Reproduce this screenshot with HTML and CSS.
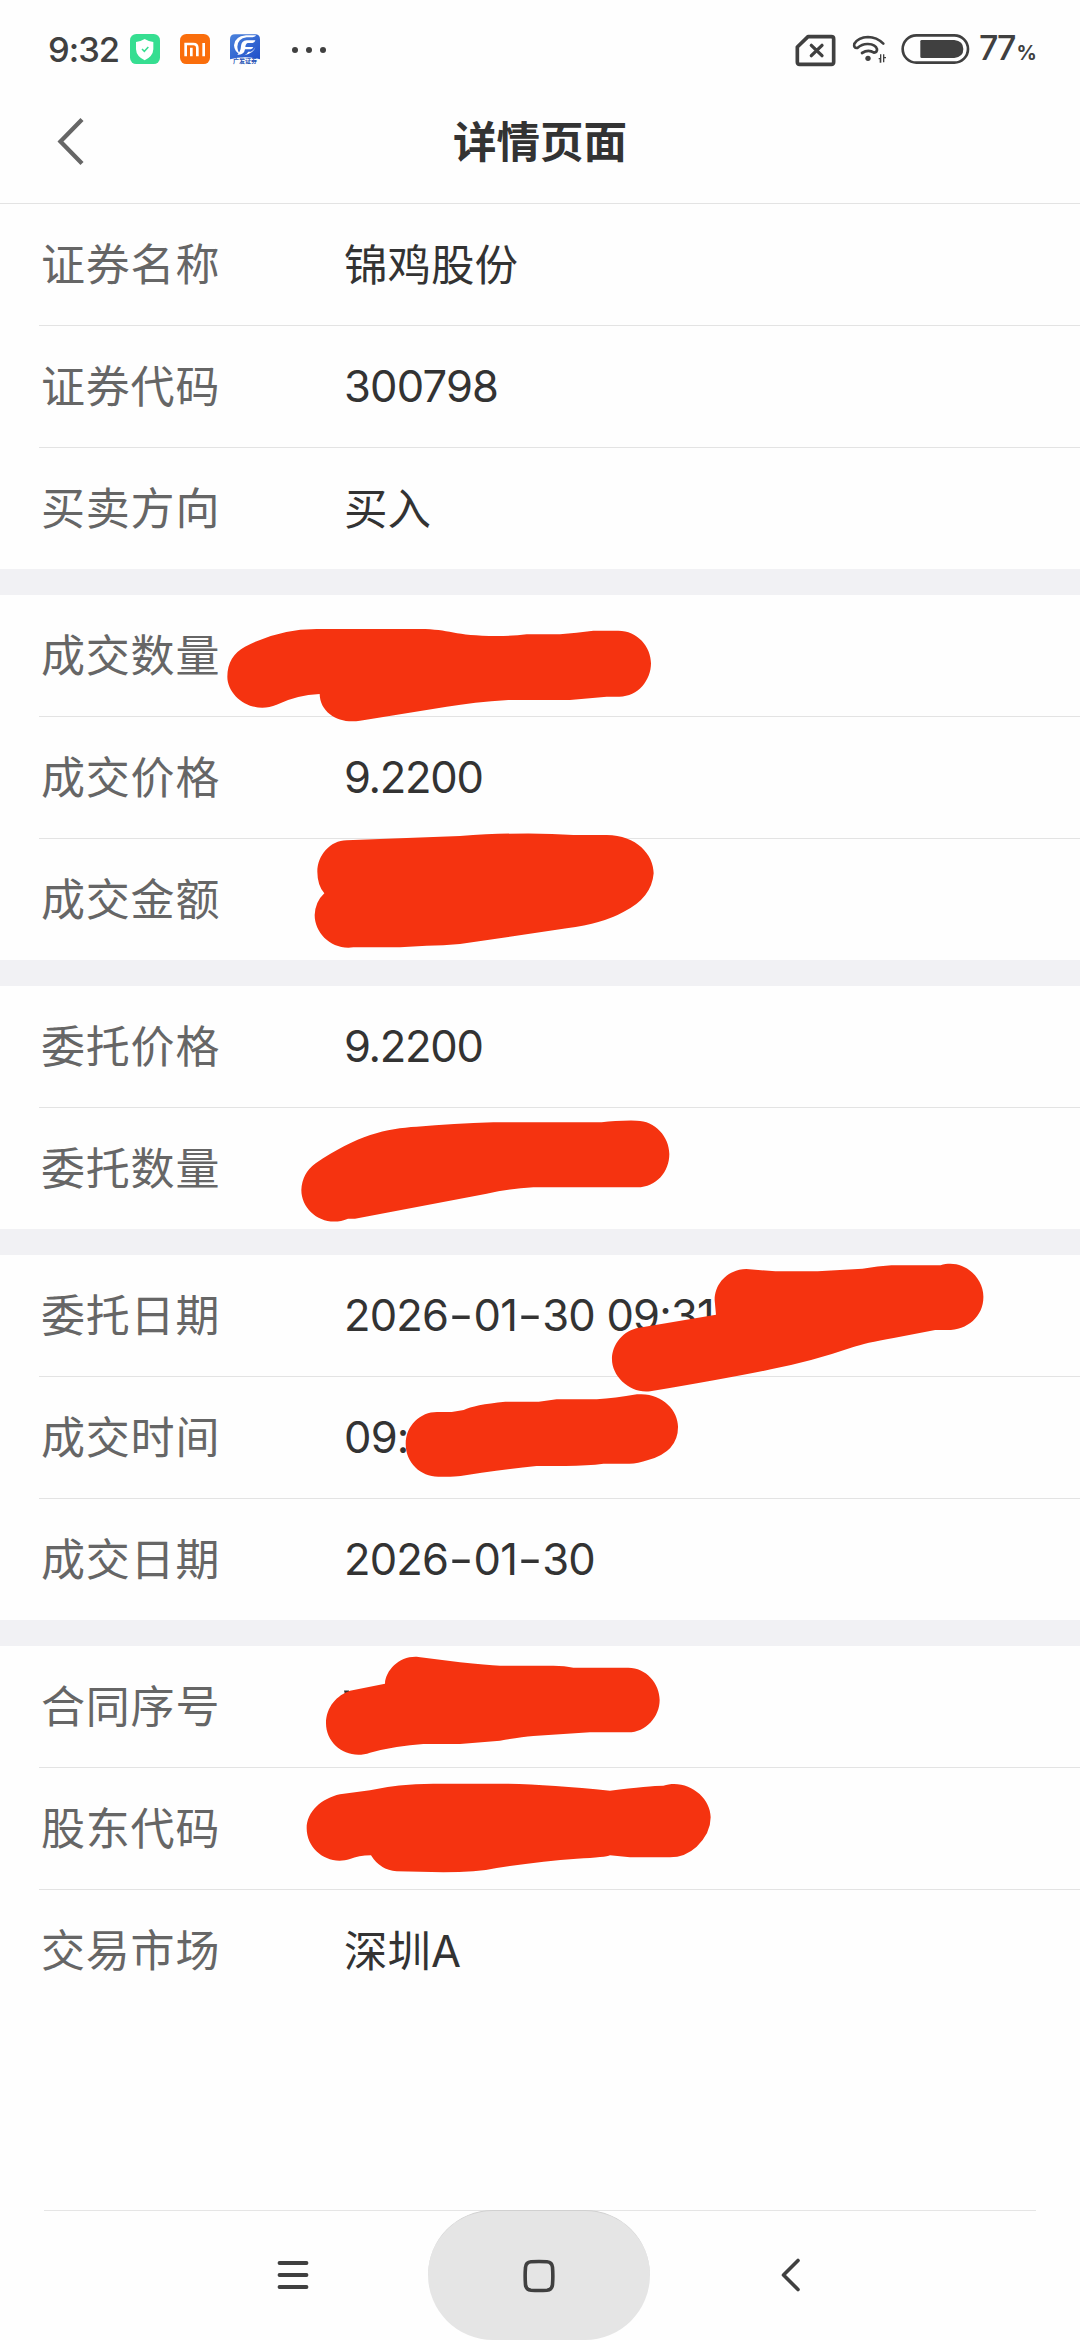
FILE: index.html
```html
<!DOCTYPE html>
<html lang="zh-CN">
<head>
<meta charset="utf-8">
<title>详情页面</title>
<link rel="stylesheet" href="styles.css">
</head>
<body>
<div class="screen">
  <div class="status">
    <div class="status-left">
      <span class="time">9:32</span>
      <svg class="app" viewBox="0 0 90 90"><rect width="90" height="90" rx="19" fill="#36de91"/><path d="M44 15q13 8 26 9v22q-1 21-26 33Q19 67 18 46V24q13-1 26-9z" fill="#fff"/><path d="M36 45l7 7 12-13" fill="none" stroke="#36de91" stroke-width="4.500"/></svg>
      <svg class="app" viewBox="0 0 90 90"><rect width="90" height="90" rx="19" fill="#fa6e0c"/><path d="M17 67V30h23q12 0 12 12v25M34 41v26M71 27v40" fill="none" stroke="#fff" stroke-width="8"/></svg>
      <svg class="app" viewBox="0 0 90 90"><defs><linearGradient id="blue" x1="0" y1="0" x2="1" y2="1"><stop offset="0" stop-color="#4b83dc"/><stop offset="1" stop-color="#1f4fc9"/></linearGradient></defs><path d="M0 76V16Q0 1 15 1h60q15 0 15 15v60q-45-12-90 0z" fill="url(#blue)"/><path d="M78 4H48Q13 8 12 34q1 20 20 28-9-8-10-24Q23 14 50 10h18q8-1 10-6zM76 19H50q-16 2-17 17-1 17-11 26 20 2 23-16h17q6-1 8-7H46q1-11 8-12h14q7-2 8-8zM76 40q-6 19-33 24 8-4 12-11h8q8-3 13-13z" fill="#fff"/><text class="app-name" x="45" y="88" text-anchor="middle">广发证券</text></svg>
      <span class="dots"><i></i><i></i><i></i></span>
    </div>
    <div class="status-right">
      <svg width="180" height="40" viewBox="155 90 540 120"><g fill="none" stroke="#404040"><path d="M203 110h70q7 0 7 7v69q0 7-7 7h-95q-7 0-7-7v-45z" stroke-width="11" stroke-linejoin="round"/><path d="M213 136l32 31m0-31l-32 31" stroke-width="10" stroke-linecap="round"/><g stroke-width="8" stroke-linecap="round"><path d="M429 131q-20-20-46-20-29 1-41 20-3 14 9 13 15-13 32-12 23 1 27 15 1 10-9 11-17-11-36 1"/></g><path d="M415 176h5v12M421 163v25M430 187v-24m0 10h7" stroke-width="4"/><rect x="487" y="106" width="196" height="82" rx="41" stroke-width="8"/></g><circle cx="383" cy="175" r="8" fill="#404040"/><path d="M544 120h98q27 3 27 27t-27 27h-98q-4 0-4-4v-46q0-4 4-4z" fill="#404040"/></svg>
      <span class="percent">77<small>%</small></span>
    </div>
  </div>
  <header class="header">
    <svg class="back" viewBox="0 0 28 50"><path d="M25 2.500L3.500 24.500 25 46.500" fill="none" stroke="#666" stroke-width="4.300"/></svg>
    <h1>详情页面</h1>
  </header>
  <main>
    <section>
      <div class="row"><span class="label">证券名称</span><span class="value">锦鸡股份</span></div>
      <div class="row"><span class="label">证券代码</span><span class="value num">300798</span></div>
      <div class="row"><span class="label">买卖方向</span><span class="value">买入</span></div>
    </section>
    <section>
      <div class="row"><span class="label">成交数量</span></div>
      <div class="row"><span class="label">成交价格</span><span class="value num price">9.2200</span></div>
      <div class="row"><span class="label">成交金额</span></div>
    </section>
    <section>
      <div class="row"><span class="label">委托价格</span><span class="value num price">9.2200</span></div>
      <div class="row"><span class="label">委托数量</span></div>
    </section>
    <section>
      <div class="row"><span class="label">委托日期</span><span class="value num">2026<b class="dash">-</b>01<b class="dash">-</b>30 09:31</span></div>
      <div class="row"><span class="label">成交时间</span><span class="value num">09:</span></div>
      <div class="row"><span class="label">成交日期</span><span class="value num">2026<b class="dash">-</b>01<b class="dash">-</b>30</span></div>
    </section>
    <section>
      <div class="row"><span class="label">合同序号</span></div>
      <div class="row"><span class="label">股东代码</span></div>
      <div class="row"><span class="label">交易市场</span><span class="value">深圳A</span></div>
    </section>
  </main>
  <nav class="nav">
    <span class="key"><svg width="32" height="34" viewBox="0 0 32 34"><path d="M2.500 5h27M2.500 17h27M2.500 29h27" stroke="#404040" stroke-width="3.800" stroke-linecap="round"/></svg></span>
    <span class="key home"><svg width="34" height="34" viewBox="0 0 34 34"><path d="M9 2.800q8-.6 16 0 5 .5 5.500 5.500.7 8.700 0 17.400-.5 5-5.500 5.500-8 .6-16 0-5-.5-5.500-5.500-.7-8.700 0-17.400Q4 3.300 9 2.800z" fill="none" stroke="#404040" stroke-width="3.600"/></svg></span>
    <span class="key"><svg width="22" height="34" viewBox="0 0 22 34"><path d="M18 2.500L3.500 17 18 31.500" fill="none" stroke="#404040" stroke-width="3.600" stroke-linecap="round" stroke-linejoin="round"/></svg></span>
  </nav>
  <svg class="marks" viewBox="0 0 1080 2340">
    <path d="M344 1690.500h5v2h-2v2h-2z" fill="#333"/>
    <g fill="#f53310">
      <g transform="translate(200 580) scale(.33333)">
        <path d="M82 290C82 248 101 218 135 200Q235 147 350 147H660C750 147 760 168 890 168Q940 168 980 163H1080Q1130 158 1180 152H1255C1312 152 1353 200 1353 250S1315 350 1258 350H1220L1110 360H925Q820 367 740 380L480 422C420 433 360 400 359 342Q290 345 230 374C157 405 82 350 82 290Z"/>
        <path d="M352 875C352 828 390 781 440 781L780 768Q980 754 1120 765H1220C1310 765 1361 825 1361 880Q1355 955 1270 996Q1210 1030 1100 1045L780 1092Q730 1097 680 1097L600 1102H460C395 1111 344 1060 344 1005Q346 965 373 940Q352 915 352 875Z"/>
      </g>
      <g transform="translate(280 980) scale(.33333)"><path d="M64 630Q66 580 107 550C230 465 320 445 410 440Q520 431 640 427H965Q1010 421 1070 422C1125 422 1168 470 1168 522S1130 622 1072 622H760Q690 626 620 641L225 716H204C135 746 64 695 64 630Z"/></g>
      <g transform="translate(320 1240) scale(.44643 .33333)">
        <path d="M654 358C654 312 680 270 715 263L887 224L884 180C884 129 915 88 955 87L1020 94H1115L1215 86Q1250 78 1280 76H1390C1440 55 1486 110 1486 170S1450 270 1405 270H1378L1285 294Q1220 309 1193 322Q1100 365 1010 388Q920 413 740 454C695 462 654 410 654 358Z"/>
        <path d="M192 612C192 556 225 516 262 516H295L322 510Q345 494 415 485H490L530 478H620Q660 475 710 463C765 456 802 510 802 560Q802 635 735 660Q710 672 690 671H635Q600 677 550 678H485Q430 686 362 698L315 708Q300 711 265 710C225 710 192 668 192 612Z"/>
      </g>
      <g transform="translate(300 1620) scale(.33333)">
        <path d="M78 310C78 260 112 225 150 212L255 191C257 150 300 106 355 111L480 127Q560 136 600 137H760Q795 137 820 143H985C1038 143 1079 190 1079 240S1038 337 985 337H870L700 348Q660 352 600 362L480 372H370Q290 377 210 398C145 422 78 375 78 310Z"/>
        <path d="M20 625C20 575 65 535 120 523L210 511Q290 491 400 491H600Q740 493 930 512Q1050 497 1090 497C1160 475 1232 530 1232 592Q1232 640 1190 680Q1155 712 1110 712H990L930 706Q920 712 830 716Q720 724 590 744Q530 757 430 757L290 754Q240 750 213 706Q175 707 150 717C85 738 20 690 20 625Z"/>
      </g>
    </g>
  </svg>
</div>
</body>
</html>
```
FILE: styles.css
```css
* { box-sizing: border-box; }
body { margin: 0; background: #fff; }
svg { display: block; }

.screen {
  position: relative;
  display: flex;
  flex-direction: column;
  width: 1080px;
  height: 2340px;
  overflow: hidden;
  background: #fefefe;
  font-family: Inter, "Noto Sans CJK SC", sans-serif;
}

.status {
  display: flex;
  justify-content: space-between;
  height: 80px;
  padding: 30px 47px 0 48px;
  color: #404040;
}
.status-left, .status-right { display: flex; height: 40px; align-items: center; }
.time { width: 82px; font-size: 34.500px; font-weight: 500; line-height: 40px; letter-spacing: -1px; }
.app { width: 30px; height: 30px; margin-right: 20px; margin-top: -2px; overflow: visible; }
.app-name { font: 700 18px "Noto Sans CJK SC", sans-serif; fill: #2a55b5; }
.dots { display: flex; gap: 8px; margin-left: 12px; }
.dots i { width: 6px; height: 6px; border-radius: 50%; background: #404040; }
.percent { width: 54px; margin-left: 7px; font-size: 34px; font-weight: 500; line-height: 40px; letter-spacing: -2px; white-space: nowrap; }
.percent small { font-size: 20px; font-weight: 700; letter-spacing: 0; margin-left: 2px; }

.header {
  display: grid;
  grid-template-columns: 57px 1fr 57px;
  height: 124px;
  border-bottom: 1px solid #e3e3e3;
}
.back { width: 28px; height: 50px; margin: 37px 0 0 57px; }
.header h1 {
  margin: 0;
  padding-top: 32px;
  text-align: center;
  font-size: 43.500px;
  line-height: 60px;
  font-weight: 700;
  color: #333;
}

section + section { border-top: 26px solid #f1f1f4; }
.row {
  display: flex;
  height: 122px;
  margin-left: 39px;
  padding-left: 2px;
  line-height: 123px;
  border-bottom: 1px solid #e3e3e3;
}
.row:last-child { height: 121px; border-bottom: 0; }
.label { width: 303px; font-size: 44px; letter-spacing: .8px; color: #666; }
.value { font-size: 43.500px; color: #333; white-space: pre; }
.num { line-height: 121px; letter-spacing: -.8px; }
.price { letter-spacing: -1.300px; }
.dash { display: inline-block; margin: 0 3px; font-weight: 400; transform: scaleX(1.250); }

.nav {
  display: flex;
  height: 130px;
  margin: auto 44px 0;
  padding-left: 138px;
  border-top: 1px solid #e5e5e5;
}
.key { display: flex; width: 222px; height: 130px; margin-top: -1px; align-items: center; justify-content: center; }
.home { margin-left: 24px; margin-right: 30px; border-radius: 65px; background: #e5e5e5; border-top: 1px solid #d0d0d0; }

.marks { position: absolute; inset: 0; width: 1080px; height: 2340px; pointer-events: none; }
```
